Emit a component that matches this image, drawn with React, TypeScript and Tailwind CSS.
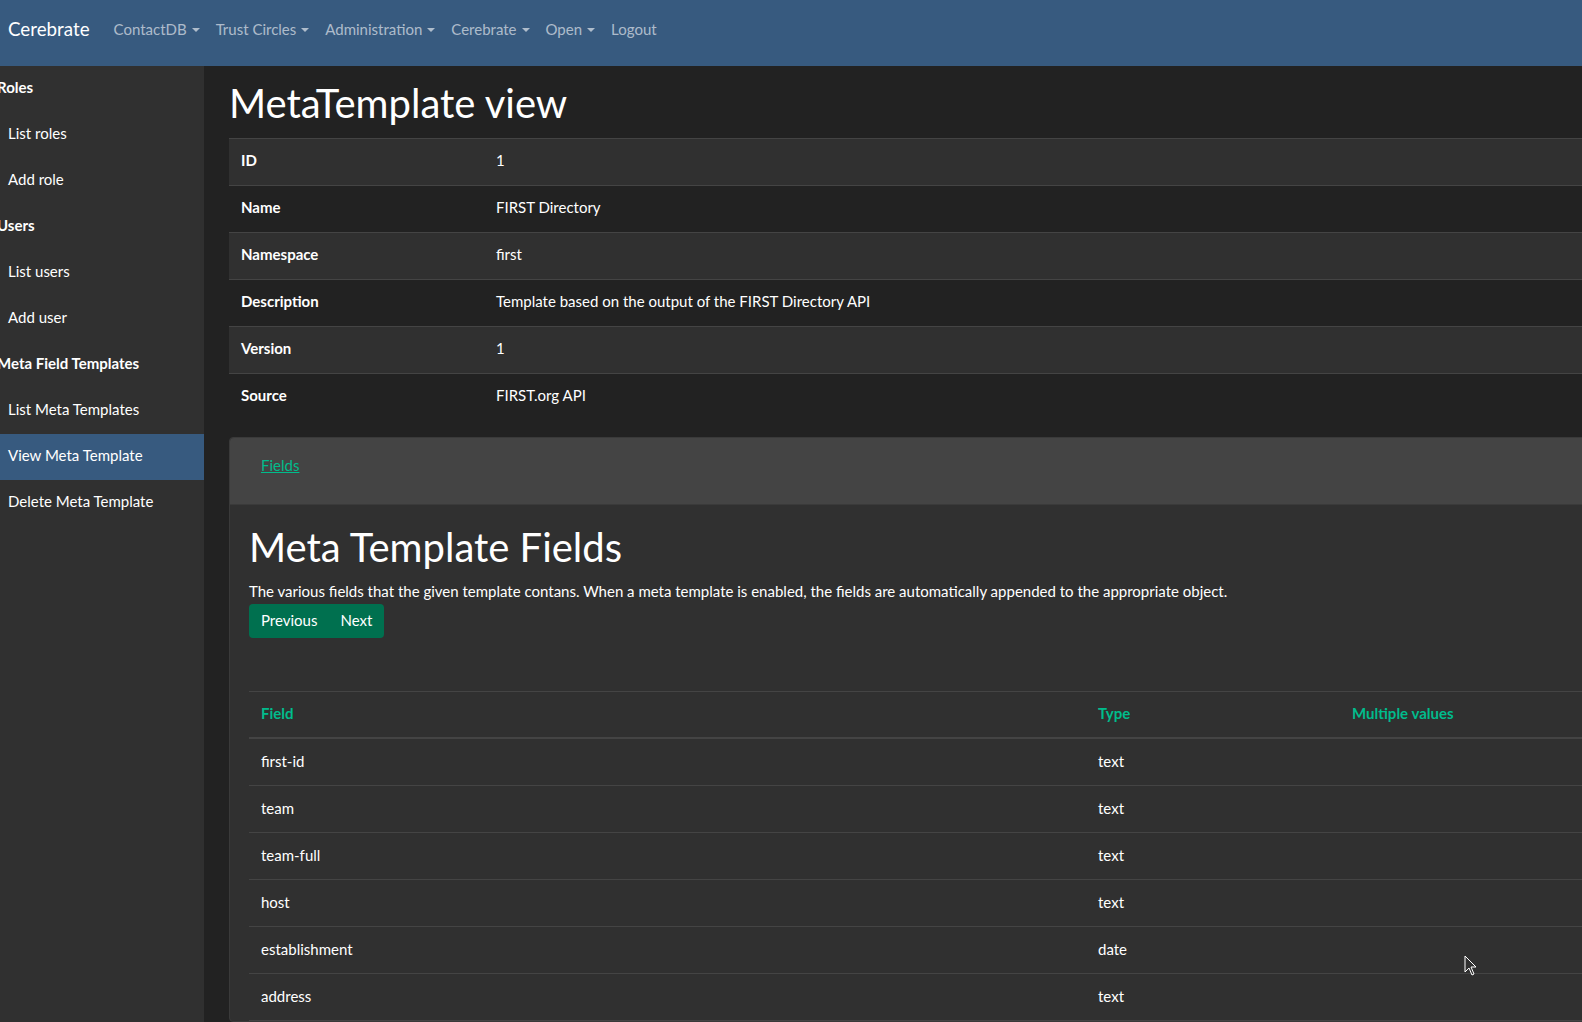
import React from "react";

const navItems = ["ContactDB", "Trust Circles", "Administration", "Cerebrate", "Open"];

type SideItem = { label: string; header?: boolean; active?: boolean };
const sideItems: SideItem[] = [
  { label: "Roles", header: true },
  { label: "List roles" },
  { label: "Add role" },
  { label: "Users", header: true },
  { label: "List users" },
  { label: "Add user" },
  { label: "Meta Field Templates", header: true },
  { label: "List Meta Templates" },
  { label: "View Meta Template", active: true },
  { label: "Delete Meta Template" },
];

const details: [string, string][] = [
  ["ID", "1"],
  ["Name", "FIRST Directory"],
  ["Namespace", "first"],
  ["Description", "Template based on the output of the FIRST Directory API"],
  ["Version", "1"],
  ["Source", "FIRST.org API"],
];

const fields: [string, string][] = [
  ["first-id", "text"],
  ["team", "text"],
  ["team-full", "text"],
  ["host", "text"],
  ["establishment", "date"],
  ["address", "text"],
];

function Caret() {
  return (
    <span className="ml-[5px] inline-block h-0 w-0 border-x-[4.5px] border-t-[4.5px] border-x-transparent border-t-current align-[3px]" />
  );
}

export default function App() {
  return (
    <div
      className="relative h-[1022px] w-[1582px] overflow-hidden bg-[#222222] text-[15px] leading-[22.5px] text-white"
      style={{ fontFamily: "Lato, 'Noto Sans', sans-serif" }}
    >
      <nav className="flex h-[66px] items-start bg-[#375a7f] px-2 pt-[15px]">
        <div className="flex h-[28px] items-center">
          <span className="mr-4 text-[18.75px] leading-[28px] text-white">Cerebrate</span>
          {navItems.map((n) => (
            <span key={n} className="px-2 text-white/60">
              {n}
              <Caret />
            </span>
          ))}
          <span className="px-2 text-white/60">Logout</span>
        </div>
      </nav>
      <div className="flex h-[956px]">
        <aside className="w-[204px] shrink-0 bg-[#303030]">
          {sideItems.map((s) =>
            s.header ? (
              <div key={s.label} className="-ml-[3px] h-[46px] pt-[10px] font-bold">
                {s.label}
              </div>
            ) : (
              <div
                key={s.label}
                className={`h-[46px] pl-2 pt-[10px] ${s.active ? "bg-[#375a7f]" : ""}`}
              >
                {s.label}
              </div>
            )
          )}
        </aside>
        <main className="min-w-0 flex-1 overflow-hidden pl-[25px] pt-[13px]">
          <div className="w-[1400px]">
            <h1 className="mb-[11px] text-[40px] leading-[48px] font-normal">MetaTemplate view</h1>
            <div>
              {details.map(([k, v], i) => (
                <div
                  key={k}
                  className={`flex h-[47px] items-start border-t border-[#444444] pt-[10px] ${i % 2 === 0 ? "bg-[#303030]" : ""}`}
                >
                  <div className="w-[255px] shrink-0 pl-3 font-bold">{k}</div>
                  <div className="pl-[12px]">{v}</div>
                </div>
              ))}
            </div>
            <div className="mt-[17px] rounded-[4px] border border-[#3a3a3a] bg-[#303030]">
              <div className="h-[67px] rounded-t-[4px] border-b border-[#3a3a3a] bg-[#444444] px-[31px] pt-[16px]">
                <span className="text-[#00bc8c] underline">Fields</span>
              </div>
              <div className="px-[19px] pt-[18px]">
                <h1 className="mb-[9px] text-[40px] leading-[48px] font-normal">Meta Template Fields</h1>
                <p>
                  The various fields that the given template contans. When a meta template is enabled, the fields are
                  automatically appended to the appropriate object.
                </p>
                <div className="mt-[1px] inline-flex h-[34px] overflow-hidden rounded-[4px] bg-[#00704f]">
                  <span className="flex items-center pl-[12px] pr-[12px]">Previous</span>
                  <span className="flex items-center pl-[11px] pr-[12px]">Next</span>
                </div>
                <div className="mt-[53px]">
                  <div className="grid h-[48px] grid-cols-[837px_254px_1fr] items-start border-t border-b-2 border-[#444444] pt-[10px] font-bold text-[#00bc8c]">
                    <div className="pl-3">Field</div>
                    <div className="pl-3">Type</div>
                    <div className="pl-3">Multiple values</div>
                  </div>
                  {fields.map(([f, t]) => (
                    <div
                      key={f}
                      className="grid h-[47px] grid-cols-[837px_254px_1fr] items-start border-b border-[#444444] pt-[11px]"
                    >
                      <div className="pl-3">{f}</div>
                      <div className="pl-3">{t}</div>
                      <div className="pl-3"></div>
                    </div>
                  ))}
                </div>
              </div>
            </div>
          </div>
        </main>
      </div>
      <svg className="absolute left-[1464px] top-[955px]" width="14" height="22" viewBox="0 0 14 22">
        <path d="M1 1 L1 17 L5 13 L8 20 L10 19 L7 12 L12 12 Z" fill="#303030" stroke="#ffffff" strokeWidth="1" />
      </svg>
    </div>
  );
}
